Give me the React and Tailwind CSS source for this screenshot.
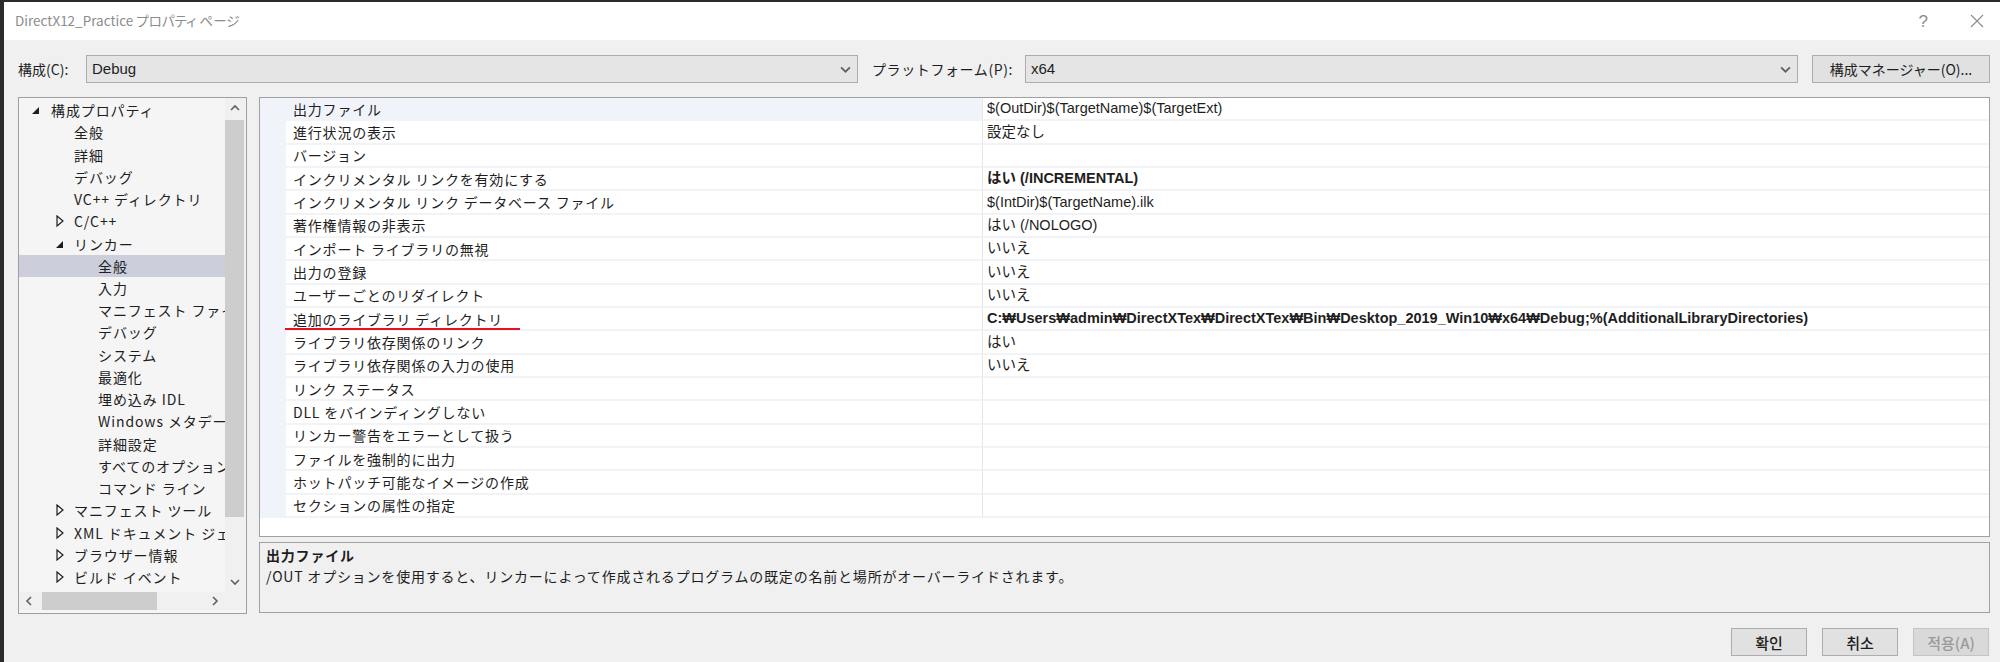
import React from 'react';

const jp = "font-['Noto_Sans_CJK_JP',sans-serif]";
const latin = "font-['Liberation_Sans','Noto_Sans_CJK_JP',sans-serif]";

const treeItems = [
  { label: '構成プロパティ', level: 0, toggle: 'open' },
  { label: '全般', level: 1 },
  { label: '詳細', level: 1 },
  { label: 'デバッグ', level: 1 },
  { label: 'VC++ ディレクトリ', level: 1 },
  { label: 'C/C++', level: 1, toggle: 'closed' },
  { label: 'リンカー', level: 1, toggle: 'open' },
  { label: '全般', level: 2, selected: true },
  { label: '入力', level: 2 },
  { label: 'マニフェスト ファイル', level: 2 },
  { label: 'デバッグ', level: 2 },
  { label: 'システム', level: 2 },
  { label: '最適化', level: 2 },
  { label: '埋め込み IDL', level: 2 },
  { label: 'Windows メタデータ', level: 2 },
  { label: '詳細設定', level: 2 },
  { label: 'すべてのオプション', level: 2 },
  { label: 'コマンド ライン', level: 2 },
  { label: 'マニフェスト ツール', level: 1, toggle: 'closed' },
  { label: 'XML ドキュメント ジェネレーター', level: 1, toggle: 'closed' },
  { label: 'ブラウザー情報', level: 1, toggle: 'closed' },
  { label: 'ビルド イベント', level: 1, toggle: 'closed' },
];

const levelPad = { 0: 'pl-[13px]', 1: 'pl-[37px]', 2: 'pl-[60px]' };
const slotWidth = { 0: 'w-[19px]', 1: 'w-[18px]', 2: 'w-[19px]' };

const rows = [
  { name: '出力ファイル', value: '$(OutDir)$(TargetName)$(TargetExt)', selected: true },
  { name: '進行状況の表示', value: '設定なし' },
  { name: 'バージョン', value: '' },
  { name: 'インクリメンタル リンクを有効にする', value: 'はい (/INCREMENTAL)', bold: true },
  { name: 'インクリメンタル リンク データベース ファイル', value: '$(IntDir)$(TargetName).ilk' },
  { name: '著作権情報の非表示', value: 'はい (/NOLOGO)' },
  { name: 'インポート ライブラリの無視', value: 'いいえ' },
  { name: '出力の登録', value: 'いいえ' },
  { name: 'ユーザーごとのリダイレクト', value: 'いいえ' },
  {
    name: '追加のライブラリ ディレクトリ',
    value: 'C:₩Users₩admin₩DirectXTex₩DirectXTex₩Bin₩Desktop_2019_Win10₩x64₩Debug;%(AdditionalLibraryDirectories)',
    bold: true,
    marked: true,
  },
  { name: 'ライブラリ依存関係のリンク', value: 'はい' },
  { name: 'ライブラリ依存関係の入力の使用', value: 'いいえ' },
  { name: 'リンク ステータス', value: '' },
  { name: 'DLL をバインディングしない', value: '' },
  { name: 'リンカー警告をエラーとして扱う', value: '' },
  { name: 'ファイルを強制的に出力', value: '' },
  { name: 'ホットパッチ可能なイメージの作成', value: '' },
  { name: 'セクションの属性の指定', value: '' },
];

const Chevron = ({ dir = 'down', className = '' }) => {
  const pts = {
    down: '1,3 5,7 9,3',
    up: '1,7 5,3 9,7',
    left: '7,1 3,5 7,9',
    right: '3,1 7,5 3,9',
  }[dir];
  return (
    <svg viewBox="0 0 10 10" className={className}>
      <polyline points={pts} fill="none" stroke="currentColor" strokeWidth="1.6" />
    </svg>
  );
};

const Toggle = ({ kind }) => {
  if (kind === 'open') {
    return (
      <svg viewBox="0 0 8 8" className="w-[8px] h-[8px] mt-[2px]">
        <polygon points="7,0 7,7 0,7" fill="#1e1e1e" />
      </svg>
    );
  }
  if (kind === 'closed') {
    return (
      <svg viewBox="0 0 8 12" className="w-[8px] h-[12px]">
        <polygon points="1,1 7,6 1,11" fill="none" stroke="#1e1e1e" strokeWidth="1.2" />
      </svg>
    );
  }
  return null;
};

const Combo = ({ value, width }) => (
  <div className={`${width} h-[28px] bg-[#e5e5e5] border border-[#adadad] flex items-center justify-between pl-[5px] pr-[6px]`}>
    <span className={`${latin} text-[15px] text-[#1e1e1e]`}>{value}</span>
    <Chevron dir="down" className="w-[11px] h-[11px] text-[#606060]" />
  </div>
);

const TreePanel = () => (
  <div className="w-[229px] h-[517px] border border-[#a0a0a0] bg-[#f5f5f5] flex flex-col">
    <div className="flex h-[494px]">
      <div className={`w-[206px] pt-[1px] overflow-hidden ${jp} text-[14px] tracking-[0.9px] text-[#1e1e1e]`}>
        {treeItems.map((item, i) => (
          <div
            key={i}
            className={`h-[22.24px] flex items-center whitespace-nowrap leading-none ${levelPad[item.level]} ${
              item.selected ? 'bg-[#cccedb]' : ''
            }`}
          >
            <span className={`${slotWidth[item.level]} shrink-0 flex items-center`}>
              <Toggle kind={item.toggle} />
            </span>
            <span>{item.label}</span>
          </div>
        ))}
      </div>
      <div className="w-[21px] flex flex-col bg-[#f0f0f0] pr-[2px]">
        <div className="h-[20px] flex items-center justify-center text-[#606060]">
          <Chevron dir="up" className="w-[10px] h-[10px]" />
        </div>
        <div className="mt-[2px] h-[397px] bg-[#cdcdcd]" />
        <div className="flex-1" />
        <div className="h-[20px] flex items-center justify-center text-[#606060]">
          <Chevron dir="down" className="w-[10px] h-[10px]" />
        </div>
      </div>
    </div>
    <div className="flex h-[18px]">
      <div className="w-[206px] flex items-center bg-[#f0f0f0]">
        <div className="w-[20px] flex justify-center text-[#606060]">
          <Chevron dir="left" className="w-[10px] h-[10px]" />
        </div>
        <div className="ml-[3px] w-[115px] h-[18px] bg-[#cdcdcd]" />
        <div className="flex-1" />
        <div className="w-[20px] flex justify-center text-[#606060]">
          <Chevron dir="right" className="w-[10px] h-[10px]" />
        </div>
      </div>
      <div className="flex-1 bg-[#f0f0f0]" />
    </div>
  </div>
);

const PropertyGrid = () => (
  <div className="h-[440px] border border-[#a0a0a0] bg-white">
    {rows.map((row, i) => (
      <div key={i} className="flex h-[23.33px]">
        <div className="w-[26px] shrink-0 bg-[#f0f4fa]" />
        <div
          className={`relative w-[696px] shrink-0 flex items-center pl-[7px] border-b-2 border-[#f1f3f7] ${jp} text-[14px] tracking-[0.8px] text-[#1e1e1e] leading-none whitespace-nowrap ${
            row.selected ? 'bg-[#f0f4fa]' : ''
          }`}
        >
          {row.name}
          {row.marked && <div className="absolute left-[-1px] bottom-[-1px] w-[235px] h-[2px] bg-[#e81123]" />}
        </div>
        <div
          className={`flex-1 flex items-center pl-[4px] border-l border-b-2 border-l-[#e6e6e6] border-b-[#f1f3f7] ${latin} text-[14.5px] text-[#1e1e1e] leading-none whitespace-nowrap ${
            row.bold ? 'font-bold' : ''
          }`}
        >
          {row.value}
        </div>
      </div>
    ))}
  </div>
);

const Description = () => (
  <div className={`mt-[5px] h-[71px] border border-[#a0a0a0] bg-[#f0f0f0] px-[6px] pt-[1px] ${jp} text-[14px] tracking-[0.8px] text-[#1e1e1e]`}>
    <div className="h-[21px] flex items-center font-bold leading-none">出力ファイル</div>
    <div className="h-[21px] flex items-center leading-none">
      /OUT オプションを使用すると、リンカーによって作成されるプログラムの既定の名前と場所がオーバーライドされます。
    </div>
  </div>
);

const DialogButton = ({ label, disabled }) => (
  <div
    className={`w-[76px] h-[28px] flex items-center justify-center border font-['Noto_Sans_CJK_KR',sans-serif] text-[15px] font-medium leading-none ${
      disabled ? 'bg-[#d9d9d9] border-[#c4c4c4] text-[#9a9a9a]' : 'bg-[#e1e1e1] border-[#adadad] text-[#1e1e1e]'
    }`}
  >
    {label}
  </div>
);

export default function App() {
  return (
    <div className="w-[2000px] h-[662px] bg-[#2b2b2b] pt-[2px] pl-[4px] flex overflow-hidden">
      <div className="flex-1 flex flex-col bg-[#f0f0f0]">
        <div className="h-[38px] bg-white flex items-center justify-between pl-[11px] pr-[16px]">
          <span className={`${jp} text-[13.5px] text-[#8c8c8c] leading-none [font-feature-settings:'palt']`}>
            DirectX12_Practice プロパティ ページ
          </span>
          <div className="flex items-center gap-[42px] text-[#8c8c8c]">
            <span className={`${latin} text-[17px] leading-none`}>?</span>
            <svg viewBox="0 0 14 14" className="w-[14px] h-[14px]">
              <path d="M1 1 L13 13 M13 1 L1 13" stroke="currentColor" strokeWidth="1.1" />
            </svg>
          </div>
        </div>

        <div className="pl-[14px] pr-[10px] flex flex-col">
          <div className="mt-[15px] h-[28px] flex items-center">
            <span className={`w-[68px] ${jp} text-[14px] text-[#1e1e1e] leading-none`}>構成(C):</span>
            <Combo value="Debug" width="w-[772px]" />
            <span className={`ml-[14px] w-[153px] ${jp} text-[14px] tracking-[0.6px] text-[#1e1e1e] leading-none`}>
              プラットフォーム(P):
            </span>
            <Combo value="x64" width="w-[773px]" />
            <div
              className={`ml-[14px] w-[178px] h-[28px] bg-[#e1e1e1] border border-[#adadad] flex items-center justify-center ${jp} text-[14px] text-[#1e1e1e] leading-none`}
            >
              構成マネージャー(O)...
            </div>
          </div>

          <div className="mt-[14px] flex">
            <TreePanel />
            <div className="ml-[12px] w-[1731px] flex flex-col">
              <PropertyGrid />
              <Description />
            </div>
          </div>

          <div className="mt-[14px] h-[28px] flex justify-end gap-[15px] pr-[1px]">
            <DialogButton label="확인" />
            <DialogButton label="취소" />
            <DialogButton label="적용(A)" disabled />
          </div>
        </div>
      </div>
    </div>
  );
}
